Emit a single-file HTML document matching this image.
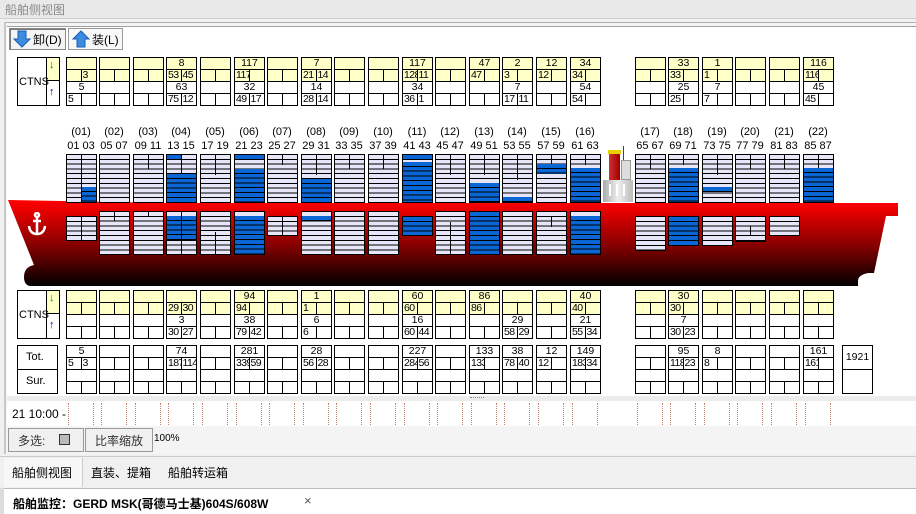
<!DOCTYPE html>
<html><head><meta charset="utf-8"><style>
*{margin:0;padding:0;box-sizing:border-box}
i{font-style:normal}
body{width:916px;height:514px;overflow:hidden;background:#f0f0f0;font-family:"Liberation Sans","Noto Sans CJK SC",sans-serif;font-size:11px;position:relative;color:#000}
.a{position:absolute}
.b{position:absolute;width:31px;height:49px;border:1px solid #000;background:#fff}
.r{display:block;height:12px;border-bottom:1px solid #000;text-align:center;line-height:11px;font-size:10.5px;overflow:hidden;white-space:nowrap}
.r:last-child{border-bottom:none}
.y{background:#ffffc8}
.s{display:flex}
.s b{font-weight:normal;width:50%;text-align:left;padding-left:1px;overflow:hidden;letter-spacing:-0.6px}
.s b:first-child{border-right:1px solid #000}
.bay{position:absolute;width:31px;border:1px solid #000;background:repeating-linear-gradient(#e6e6f8 0 3.8px,#000 3.8px 4.8px)}
.bay.w{background:repeating-linear-gradient(#fff 0 3.8px,#000 3.8px 4.8px)}
.bl{position:absolute;left:0;right:0;bottom:0;background:repeating-linear-gradient(#0a66d4 0 3.8px,#000 3.8px 4.8px)}
.vl{position:absolute;left:14px;top:0;width:1px;background:#000}
.lab{position:absolute;width:40px;text-align:center;font-size:11px}
.tl{position:absolute;top:403px;height:22px;width:26px;border-left:1px dotted #c08070;border-right:1px dotted #c08070}
</style></head><body>
<div class="a" style="left:0;top:0;width:916px;height:19px;background:#e9e9e9;border-bottom:1px solid #d0d0d0"></div>
<div class="a" style="left:5px;top:1px;font-size:12px;color:#8a8a8a">船舶侧视图</div>
<div class="a" style="left:4px;top:22px;width:912px;height:432px;border-left:2px solid #c8c8c8;border-top:1px solid #b0b0b0;background:#f4f4f4"></div>
<div class="a" style="left:7px;top:26px;width:909px;height:28px;background:#fff;border-top:1px solid #a0a0a0"></div>
<div class="a" style="left:9px;top:28px;width:57px;height:22px;border:1px solid #888;background:#f4f4f4;box-shadow:inset 1px 1px 0 #777"></div>
<svg class="a" style="left:13px;top:30px" width="18" height="18"><path d="M5 1h8v8h4L9 17 1 9h4z" fill="#3c8ce0" stroke="#1a5fb4"/></svg>
<div class="a" style="left:33px;top:31px;font-size:12px">卸(D)</div>
<div class="a" style="left:68px;top:28px;width:55px;height:22px;border:1px solid #999;background:#f8f8f8"></div>
<svg class="a" style="left:72px;top:30px" width="18" height="18"><path d="M5 17h8V9h4L9 1 1 9h4z" fill="#3c8ce0" stroke="#1a5fb4"/></svg>
<div class="a" style="left:92px;top:31px;font-size:12px">装(L)</div>
<div class="a" style="left:7px;top:54px;width:909px;height:342px;background:#fff"></div>
<div class="a" style="left:7px;top:396px;width:909px;height:5px;background:#ececec"></div>
<div class="a" style="left:470px;top:397px;width:14px;height:2px;border-top:1px dotted #888"></div>

<svg class="a" style="left:0;top:195px" width="916" height="95">
<defs><linearGradient id="g" x1="0" y1="0" x2="0" y2="1"><stop offset="0" stop-color="#ff0000"/><stop offset="0.12" stop-color="#e80000"/><stop offset="0.55" stop-color="#800000"/><stop offset="1" stop-color="#000"/></linearGradient></defs>
<path d="M8 5 L 170 8 L898 8 L898 21 L886 21 L874 78 L868 78 Q858 80 858 86 L858 91 L30 91 Q24 90 24 82 Q24 72 34 70 Z" fill="url(#g)"/>
</svg>
<svg class="a" style="left:25px;top:212px" width="24" height="26"><g fill="none" stroke="#fff" stroke-width="2.5"><circle cx="12" cy="3" r="2"/><path d="M12 5v17M4 14q1 8 8 8q7 0 8-8M8 9h8"/></g></svg>

<div class="a" style="left:603px;top:180px;width:30px;height:22px;background:linear-gradient(90deg,#aaa,#eee,#bbb)"></div>
<div class="a" style="left:607px;top:184px;width:22px;height:12px;background:repeating-linear-gradient(90deg,transparent 0 2px,#fff 2px 4px,transparent 4px 7px)"></div>
<div class="a" style="left:609px;top:153px;width:11px;height:27px;background:linear-gradient(90deg,#d03030,#a00000)"></div>
<div class="a" style="left:608px;top:150px;width:13px;height:4px;background:#e8d000"></div>
<div class="a" style="left:621px;top:160px;width:10px;height:20px;background:#ddd;border:1px solid #999"></div>
<div class="a" style="left:623px;top:146px;width:1px;height:14px;background:#444"></div>

<div class="a" style="left:17px;top:57px;width:43px;height:49px;border:1px solid #000;background:#fff"></div>
<div class="a" style="left:46px;top:57px;width:14px;height:24px;background:#ffffc8;border:1px solid #000"></div>
<div class="a" style="left:46px;top:80px;width:14px;height:26px;border:1px solid #000"></div>
<div class="a" style="left:19px;top:76px">CTNS</div>
<div class="a" style="left:49px;top:59px;color:#080;font-size:11px">↓</div>
<div class="a" style="left:49px;top:86px;color:#00c;font-size:11px">↑</div>
<div class="a" style="left:17px;top:290px;width:43px;height:49px;border:1px solid #000;background:#fff"></div>
<div class="a" style="left:46px;top:290px;width:14px;height:24px;background:#ffffc8;border:1px solid #000"></div>
<div class="a" style="left:46px;top:313px;width:14px;height:26px;border:1px solid #000"></div>
<div class="a" style="left:19px;top:309px">CTNS</div>
<div class="a" style="left:49px;top:292px;color:#080">↓</div>
<div class="a" style="left:49px;top:319px;color:#00c">↑</div>
<div class="a" style="left:17px;top:345px;width:41px;height:49px;border:1px solid #000;background:#fff"></div>
<div class="a" style="left:17px;top:369px;width:41px;height:1px;background:#000"></div>
<div class="a" style="left:26px;top:351px">Tot.</div>
<div class="a" style="left:26px;top:375px">Sur.</div>

<div class="b" style="left:66px;top:57px"><i class="r y"></i><i class="r y s"><b></b><b>3</b></i><i class="r">5</i><i class="r s"><b>5</b><b></b></i></div>
<div class="b" style="left:99px;top:57px"><i class="r y"></i><i class="r y s"><b></b><b></b></i><i class="r"></i><i class="r s"><b></b><b></b></i></div>
<div class="b" style="left:133px;top:57px"><i class="r y"></i><i class="r y s"><b></b><b></b></i><i class="r"></i><i class="r s"><b></b><b></b></i></div>
<div class="b" style="left:166px;top:57px"><i class="r y">8</i><i class="r y s"><b>53</b><b>45</b></i><i class="r">63</i><i class="r s"><b>75</b><b>12</b></i></div>
<div class="b" style="left:200px;top:57px"><i class="r y"></i><i class="r y s"><b></b><b></b></i><i class="r"></i><i class="r s"><b></b><b></b></i></div>
<div class="b" style="left:234px;top:57px"><i class="r y">117</i><i class="r y s"><b>117</b><b></b></i><i class="r">32</i><i class="r s"><b>49</b><b>17</b></i></div>
<div class="b" style="left:267px;top:57px"><i class="r y"></i><i class="r y s"><b></b><b></b></i><i class="r"></i><i class="r s"><b></b><b></b></i></div>
<div class="b" style="left:301px;top:57px"><i class="r y">7</i><i class="r y s"><b>21</b><b>14</b></i><i class="r">14</i><i class="r s"><b>28</b><b>14</b></i></div>
<div class="b" style="left:334px;top:57px"><i class="r y"></i><i class="r y s"><b></b><b></b></i><i class="r"></i><i class="r s"><b></b><b></b></i></div>
<div class="b" style="left:368px;top:57px"><i class="r y"></i><i class="r y s"><b></b><b></b></i><i class="r"></i><i class="r s"><b></b><b></b></i></div>
<div class="b" style="left:402px;top:57px"><i class="r y">117</i><i class="r y s"><b>128</b><b>11</b></i><i class="r">34</i><i class="r s"><b>36</b><b>1</b></i></div>
<div class="b" style="left:435px;top:57px"><i class="r y"></i><i class="r y s"><b></b><b></b></i><i class="r"></i><i class="r s"><b></b><b></b></i></div>
<div class="b" style="left:469px;top:57px"><i class="r y">47</i><i class="r y s"><b>47</b><b></b></i><i class="r"></i><i class="r s"><b></b><b></b></i></div>
<div class="b" style="left:502px;top:57px"><i class="r y">2</i><i class="r y s"><b>3</b><b></b></i><i class="r">7</i><i class="r s"><b>17</b><b>11</b></i></div>
<div class="b" style="left:536px;top:57px"><i class="r y">12</i><i class="r y s"><b>12</b><b></b></i><i class="r"></i><i class="r s"><b></b><b></b></i></div>
<div class="b" style="left:570px;top:57px"><i class="r y">34</i><i class="r y s"><b>34</b><b></b></i><i class="r">54</i><i class="r s"><b>54</b><b></b></i></div>
<div class="b" style="left:635px;top:57px"><i class="r y"></i><i class="r y s"><b></b><b></b></i><i class="r"></i><i class="r s"><b></b><b></b></i></div>
<div class="b" style="left:668px;top:57px"><i class="r y">33</i><i class="r y s"><b>33</b><b></b></i><i class="r">25</i><i class="r s"><b>25</b><b></b></i></div>
<div class="b" style="left:702px;top:57px"><i class="r y">1</i><i class="r y s"><b>1</b><b></b></i><i class="r">7</i><i class="r s"><b>7</b><b></b></i></div>
<div class="b" style="left:735px;top:57px"><i class="r y"></i><i class="r y s"><b></b><b></b></i><i class="r"></i><i class="r s"><b></b><b></b></i></div>
<div class="b" style="left:769px;top:57px"><i class="r y"></i><i class="r y s"><b></b><b></b></i><i class="r"></i><i class="r s"><b></b><b></b></i></div>
<div class="b" style="left:803px;top:57px"><i class="r y">116</i><i class="r y s"><b>116</b><b></b></i><i class="r">45</i><i class="r s"><b>45</b><b></b></i></div>

<div class="lab" style="left:61px;top:126px">(01)</div><div class="lab" style="left:61px;top:140px">01 03</div>
<div class="lab" style="left:94px;top:126px">(02)</div><div class="lab" style="left:94px;top:140px">05 07</div>
<div class="lab" style="left:128px;top:126px">(03)</div><div class="lab" style="left:128px;top:140px">09 11</div>
<div class="lab" style="left:161px;top:126px">(04)</div><div class="lab" style="left:161px;top:140px">13 15</div>
<div class="lab" style="left:195px;top:126px">(05)</div><div class="lab" style="left:195px;top:140px">17 19</div>
<div class="lab" style="left:229px;top:126px">(06)</div><div class="lab" style="left:229px;top:140px">21 23</div>
<div class="lab" style="left:262px;top:126px">(07)</div><div class="lab" style="left:262px;top:140px">25 27</div>
<div class="lab" style="left:296px;top:126px">(08)</div><div class="lab" style="left:296px;top:140px">29 31</div>
<div class="lab" style="left:329px;top:126px">(09)</div><div class="lab" style="left:329px;top:140px">33 35</div>
<div class="lab" style="left:363px;top:126px">(10)</div><div class="lab" style="left:363px;top:140px">37 39</div>
<div class="lab" style="left:397px;top:126px">(11)</div><div class="lab" style="left:397px;top:140px">41 43</div>
<div class="lab" style="left:430px;top:126px">(12)</div><div class="lab" style="left:430px;top:140px">45 47</div>
<div class="lab" style="left:464px;top:126px">(13)</div><div class="lab" style="left:464px;top:140px">49 51</div>
<div class="lab" style="left:497px;top:126px">(14)</div><div class="lab" style="left:497px;top:140px">53 55</div>
<div class="lab" style="left:531px;top:126px">(15)</div><div class="lab" style="left:531px;top:140px">57 59</div>
<div class="lab" style="left:565px;top:126px">(16)</div><div class="lab" style="left:565px;top:140px">61 63</div>
<div class="lab" style="left:630px;top:126px">(17)</div><div class="lab" style="left:630px;top:140px">65 67</div>
<div class="lab" style="left:663px;top:126px">(18)</div><div class="lab" style="left:663px;top:140px">69 71</div>
<div class="lab" style="left:697px;top:126px">(19)</div><div class="lab" style="left:697px;top:140px">73 75</div>
<div class="lab" style="left:730px;top:126px">(20)</div><div class="lab" style="left:730px;top:140px">77 79</div>
<div class="lab" style="left:764px;top:126px">(21)</div><div class="lab" style="left:764px;top:140px">81 83</div>
<div class="lab" style="left:798px;top:126px">(22)</div><div class="lab" style="left:798px;top:140px">85 87</div>

<div class="bay" style="left:66px;top:154px;height:49px"><div class="vl" style="height:47px"></div><div class="bl" style="left:15px;height:15px"></div></div>
<div class="bay" style="left:99px;top:154px;height:49px"></div>
<div class="bay" style="left:133px;top:154px;height:49px"><div class="vl" style="height:14px"></div></div>
<div class="bay" style="left:166px;top:154px;height:49px"><div class="vl" style="height:20px"></div><div class="bl" style="height:28px"></div><div class="bl" style="top:0;height:4px;right:15px"></div></div>
<div class="bay" style="left:200px;top:154px;height:49px"><div class="vl" style="height:20px"></div></div>
<div class="bay" style="left:234px;top:154px;height:49px"><div class="bl" style="height:33px"></div><div class="bl" style="top:0;height:4px"></div></div>
<div class="bay" style="left:267px;top:154px;height:49px"><div class="vl" style="height:10px"></div></div>
<div class="bay" style="left:301px;top:154px;height:49px"><div class="vl" style="height:20px"></div><div class="bl" style="height:23px"></div></div>
<div class="bay" style="left:334px;top:154px;height:49px"><div class="vl" style="height:14px"></div></div>
<div class="bay" style="left:368px;top:154px;height:49px"><div class="vl" style="height:14px"></div></div>
<div class="bay" style="left:402px;top:154px;height:49px"><div class="bl" style="height:40px"></div><div class="bl" style="top:0;height:4px"></div></div>
<div class="bay" style="left:435px;top:154px;height:49px"><div class="vl" style="height:20px"></div></div>
<div class="bay" style="left:469px;top:154px;height:49px"><div class="vl" style="height:20px"></div><div class="bl" style="height:19px"></div></div>
<div class="bay" style="left:502px;top:154px;height:49px"><div class="vl" style="height:25px"></div><div class="bl" style="height:5px"></div></div>
<div class="bay" style="left:536px;top:154px;height:49px"><div class="vl" style="height:10px"></div><div class="bl" style="top:9px;height:10px"></div></div>
<div class="bay" style="left:570px;top:154px;height:49px"><div class="vl" style="height:10px"></div><div class="bl" style="height:34px"></div></div>
<div class="bay" style="left:635px;top:154px;height:49px"><div class="vl" style="height:14px"></div></div>
<div class="bay" style="left:668px;top:154px;height:49px"><div class="vl" style="height:10px"></div><div class="bl" style="height:34px"></div></div>
<div class="bay" style="left:702px;top:154px;height:49px"><div class="vl" style="height:20px"></div><div class="bl" style="bottom:10px;height:5px"></div></div>
<div class="bay" style="left:735px;top:154px;height:49px"><div class="vl" style="height:14px"></div></div>
<div class="bay" style="left:769px;top:154px;height:49px"><div class="vl" style="height:14px"></div></div>
<div class="bay" style="left:803px;top:154px;height:49px"><div class="vl" style="height:14px"></div><div class="bl" style="height:34px"></div></div>

<div class="bay" style="left:66px;top:216px;height:25px"><div class="vl" style="height:23px"></div></div>
<div class="bay" style="left:99px;top:211px;height:44px"><div class="vl" style="height:9px"></div></div>
<div class="bay" style="left:133px;top:211px;height:44px"><div class="vl" style="height:5px"></div></div>
<div class="bay" style="left:166px;top:211px;height:44px"><div class="bl" style="top:4px;height:24px;bottom:auto"></div><div class="vl" style="height:42px"></div></div>
<div class="bay" style="left:200px;top:211px;height:44px"><div class="vl" style="top:20px;height:22px"></div></div>
<div class="bay" style="left:234px;top:211px;height:44px"><div class="bl" style="height:38px"></div></div>
<div class="bay" style="left:267px;top:216px;height:20px"><div class="vl" style="height:18px"></div></div>
<div class="bay" style="left:301px;top:211px;height:44px"><div class="bl" style="top:4px;height:5px;bottom:auto"></div></div>
<div class="bay" style="left:334px;top:211px;height:44px"></div>
<div class="bay" style="left:368px;top:211px;height:44px"></div>
<div class="bay" style="left:402px;top:216px;height:20px"><div class="bl" style="height:18px"></div></div>
<div class="bay" style="left:435px;top:211px;height:44px"><div class="vl" style="top:10px;height:32px"></div></div>
<div class="bay" style="left:469px;top:211px;height:44px"><div class="bl" style="height:42px"></div></div>
<div class="bay" style="left:502px;top:211px;height:44px"></div>
<div class="bay" style="left:536px;top:211px;height:44px"><div class="vl" style="top:5px;height:10px"></div></div>
<div class="bay" style="left:570px;top:211px;height:44px"><div class="bl" style="height:38px"></div></div>
<div class="bay" style="left:635px;top:216px;height:35px"></div>
<div class="bay" style="left:668px;top:216px;height:30px"><div class="bl" style="height:28px"></div></div>
<div class="bay" style="left:702px;top:216px;height:30px"></div>
<div class="bay" style="left:735px;top:216px;height:26px"><div class="vl" style="top:9px;height:10px"></div></div>
<div class="bay" style="left:769px;top:216px;height:20px"></div>

<div class="b" style="left:66px;top:290px"><i class="r y"></i><i class="r y s"><b></b><b></b></i><i class="r"></i><i class="r s"><b></b><b></b></i></div>
<div class="b" style="left:99px;top:290px"><i class="r y"></i><i class="r y s"><b></b><b></b></i><i class="r"></i><i class="r s"><b></b><b></b></i></div>
<div class="b" style="left:133px;top:290px"><i class="r y"></i><i class="r y s"><b></b><b></b></i><i class="r"></i><i class="r s"><b></b><b></b></i></div>
<div class="b" style="left:166px;top:290px"><i class="r y"></i><i class="r y s"><b>29</b><b>30</b></i><i class="r">3</i><i class="r s"><b>30</b><b>27</b></i></div>
<div class="b" style="left:200px;top:290px"><i class="r y"></i><i class="r y s"><b></b><b></b></i><i class="r"></i><i class="r s"><b></b><b></b></i></div>
<div class="b" style="left:234px;top:290px"><i class="r y">94</i><i class="r y s"><b>94</b><b></b></i><i class="r">38</i><i class="r s"><b>79</b><b>42</b></i></div>
<div class="b" style="left:267px;top:290px"><i class="r y"></i><i class="r y s"><b></b><b></b></i><i class="r"></i><i class="r s"><b></b><b></b></i></div>
<div class="b" style="left:301px;top:290px"><i class="r y">1</i><i class="r y s"><b>1</b><b></b></i><i class="r">6</i><i class="r s"><b>6</b><b></b></i></div>
<div class="b" style="left:334px;top:290px"><i class="r y"></i><i class="r y s"><b></b><b></b></i><i class="r"></i><i class="r s"><b></b><b></b></i></div>
<div class="b" style="left:368px;top:290px"><i class="r y"></i><i class="r y s"><b></b><b></b></i><i class="r"></i><i class="r s"><b></b><b></b></i></div>
<div class="b" style="left:402px;top:290px"><i class="r y">60</i><i class="r y s"><b>60</b><b></b></i><i class="r">16</i><i class="r s"><b>60</b><b>44</b></i></div>
<div class="b" style="left:435px;top:290px"><i class="r y"></i><i class="r y s"><b></b><b></b></i><i class="r"></i><i class="r s"><b></b><b></b></i></div>
<div class="b" style="left:469px;top:290px"><i class="r y">86</i><i class="r y s"><b>86</b><b></b></i><i class="r"></i><i class="r s"><b></b><b></b></i></div>
<div class="b" style="left:502px;top:290px"><i class="r y"></i><i class="r y s"><b></b><b></b></i><i class="r">29</i><i class="r s"><b>58</b><b>29</b></i></div>
<div class="b" style="left:536px;top:290px"><i class="r y"></i><i class="r y s"><b></b><b></b></i><i class="r"></i><i class="r s"><b></b><b></b></i></div>
<div class="b" style="left:570px;top:290px"><i class="r y">40</i><i class="r y s"><b>40</b><b></b></i><i class="r">21</i><i class="r s"><b>55</b><b>34</b></i></div>
<div class="b" style="left:635px;top:290px"><i class="r y"></i><i class="r y s"><b></b><b></b></i><i class="r"></i><i class="r s"><b></b><b></b></i></div>
<div class="b" style="left:668px;top:290px"><i class="r y">30</i><i class="r y s"><b>30</b><b></b></i><i class="r">7</i><i class="r s"><b>30</b><b>23</b></i></div>
<div class="b" style="left:702px;top:290px"><i class="r y"></i><i class="r y s"><b></b><b></b></i><i class="r"></i><i class="r s"><b></b><b></b></i></div>
<div class="b" style="left:735px;top:290px"><i class="r y"></i><i class="r y s"><b></b><b></b></i><i class="r"></i><i class="r s"><b></b><b></b></i></div>
<div class="b" style="left:769px;top:290px"><i class="r y"></i><i class="r y s"><b></b><b></b></i><i class="r"></i><i class="r s"><b></b><b></b></i></div>
<div class="b" style="left:803px;top:290px"><i class="r y"></i><i class="r y s"><b></b><b></b></i><i class="r"></i><i class="r s"><b></b><b></b></i></div>

<div class="b" style="left:66px;top:345px"><i class="r">5</i><i class="r s"><b>5</b><b>3</b></i><i class="r"></i><i class="r s"><b></b><b></b></i></div>
<div class="b" style="left:99px;top:345px"><i class="r"></i><i class="r s"><b></b><b></b></i><i class="r"></i><i class="r s"><b></b><b></b></i></div>
<div class="b" style="left:133px;top:345px"><i class="r"></i><i class="r s"><b></b><b></b></i><i class="r"></i><i class="r s"><b></b><b></b></i></div>
<div class="b" style="left:166px;top:345px"><i class="r">74</i><i class="r s"><b>187</b><b>114</b></i><i class="r"></i><i class="r s"><b></b><b></b></i></div>
<div class="b" style="left:200px;top:345px"><i class="r"></i><i class="r s"><b></b><b></b></i><i class="r"></i><i class="r s"><b></b><b></b></i></div>
<div class="b" style="left:234px;top:345px"><i class="r">281</i><i class="r s"><b>339</b><b>59</b></i><i class="r"></i><i class="r s"><b></b><b></b></i></div>
<div class="b" style="left:267px;top:345px"><i class="r"></i><i class="r s"><b></b><b></b></i><i class="r"></i><i class="r s"><b></b><b></b></i></div>
<div class="b" style="left:301px;top:345px"><i class="r">28</i><i class="r s"><b>56</b><b>28</b></i><i class="r"></i><i class="r s"><b></b><b></b></i></div>
<div class="b" style="left:334px;top:345px"><i class="r"></i><i class="r s"><b></b><b></b></i><i class="r"></i><i class="r s"><b></b><b></b></i></div>
<div class="b" style="left:368px;top:345px"><i class="r"></i><i class="r s"><b></b><b></b></i><i class="r"></i><i class="r s"><b></b><b></b></i></div>
<div class="b" style="left:402px;top:345px"><i class="r">227</i><i class="r s"><b>284</b><b>56</b></i><i class="r"></i><i class="r s"><b></b><b></b></i></div>
<div class="b" style="left:435px;top:345px"><i class="r"></i><i class="r s"><b></b><b></b></i><i class="r"></i><i class="r s"><b></b><b></b></i></div>
<div class="b" style="left:469px;top:345px"><i class="r">133</i><i class="r s"><b>133</b><b></b></i><i class="r"></i><i class="r s"><b></b><b></b></i></div>
<div class="b" style="left:502px;top:345px"><i class="r">38</i><i class="r s"><b>78</b><b>40</b></i><i class="r"></i><i class="r s"><b></b><b></b></i></div>
<div class="b" style="left:536px;top:345px"><i class="r">12</i><i class="r s"><b>12</b><b></b></i><i class="r"></i><i class="r s"><b></b><b></b></i></div>
<div class="b" style="left:570px;top:345px"><i class="r">149</i><i class="r s"><b>183</b><b>34</b></i><i class="r"></i><i class="r s"><b></b><b></b></i></div>
<div class="b" style="left:635px;top:345px"><i class="r"></i><i class="r s"><b></b><b></b></i><i class="r"></i><i class="r s"><b></b><b></b></i></div>
<div class="b" style="left:668px;top:345px"><i class="r">95</i><i class="r s"><b>118</b><b>23</b></i><i class="r"></i><i class="r s"><b></b><b></b></i></div>
<div class="b" style="left:702px;top:345px"><i class="r">8</i><i class="r s"><b>8</b><b></b></i><i class="r"></i><i class="r s"><b></b><b></b></i></div>
<div class="b" style="left:735px;top:345px"><i class="r"></i><i class="r s"><b></b><b></b></i><i class="r"></i><i class="r s"><b></b><b></b></i></div>
<div class="b" style="left:769px;top:345px"><i class="r"></i><i class="r s"><b></b><b></b></i><i class="r"></i><i class="r s"><b></b><b></b></i></div>
<div class="b" style="left:803px;top:345px"><i class="r">161</i><i class="r s"><b>161</b><b></b></i><i class="r"></i><i class="r s"><b></b><b></b></i></div>
<div class="a" style="left:842px;top:345px;width:31px;height:49px;border:1px solid #000;background:#fff"><div style="height:24px;border-bottom:1px solid #000;text-align:center;line-height:22px;font-size:10.5px">1921</div></div>

<div class="a" style="left:7px;top:401px;width:909px;height:25px;background:#fff"></div>
<div class="a" style="left:12px;top:407px;font-size:12px">21 10:00 -</div>
<div class="tl" style="left:68px"></div><div class="tl" style="left:101px"></div><div class="tl" style="left:135px"></div><div class="tl" style="left:168px"></div><div class="tl" style="left:202px"></div><div class="tl" style="left:236px"></div><div class="tl" style="left:269px"></div><div class="tl" style="left:303px"></div><div class="tl" style="left:336px"></div><div class="tl" style="left:370px"></div><div class="tl" style="left:404px"></div><div class="tl" style="left:437px"></div><div class="tl" style="left:471px"></div><div class="tl" style="left:504px"></div><div class="tl" style="left:538px"></div><div class="tl" style="left:572px"></div><div class="tl" style="left:637px"></div><div class="tl" style="left:670px"></div><div class="tl" style="left:704px"></div><div class="tl" style="left:737px"></div><div class="tl" style="left:771px"></div><div class="tl" style="left:805px"></div>

<div class="a" style="left:8px;top:428px;width:76px;height:24px;border:1px solid #999;background:#f0f0f0"></div>
<div class="a" style="left:18px;top:432px;font-size:12px;color:#333">多选:</div>
<div class="a" style="left:59px;top:434px;width:11px;height:11px;border:1px solid #333;background:#bbb"></div>
<div class="a" style="left:85px;top:428px;width:68px;height:24px;border:1px solid #999;background:#f0f0f0"></div>
<div class="a" style="left:95px;top:432px;font-size:12px;color:#333">比率缩放</div>
<div class="a" style="left:154px;top:433px;font-size:10px">100%</div>

<div class="a" style="left:0;top:456px;width:916px;height:32px;background:#f0f0f0;border-top:1px solid #ccc"></div>
<div class="a" style="left:4px;top:458px;width:79px;height:29px;background:#f7f7f7;border-right:1px solid #ccc"></div>
<div class="a" style="left:12px;top:464px;font-size:12px">船舶侧视图</div>
<div class="a" style="left:91px;top:464px;font-size:12px">直装、提箱</div>
<div class="a" style="left:168px;top:464px;font-size:12px">船舶转运箱</div>
<div class="a" style="left:0;top:488px;width:916px;height:26px;background:#fff;border-top:1px solid #bbb"></div>
<div class="a" style="left:0;top:488px;width:4px;height:26px;background:#ddd"></div>
<div class="a" style="left:13px;top:495px;font-size:12px;font-weight:bold">船舶监控：GERD MSK(哥德马士基)604S/608W</div>
<div class="a" style="left:304px;top:493px;font-size:13px;color:#555">×</div>
</body></html>
